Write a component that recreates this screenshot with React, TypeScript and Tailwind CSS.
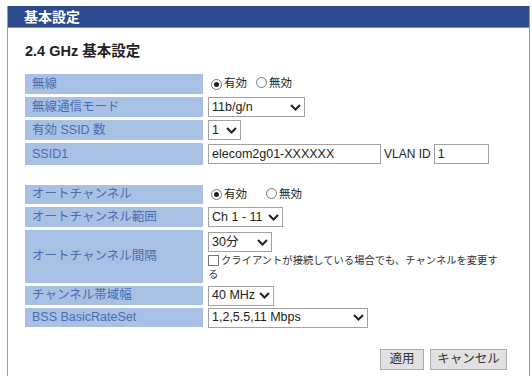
import React from "react";

const Chevron = () => (
  <svg width="11" height="7" viewBox="0 0 11 7" className="shrink-0">
    <path d="M1 1 L5.5 5.5 L10 1" stroke="#222" strokeWidth="2" fill="none" />
  </svg>
);

function Select({ text, w }: { text: string; w: string }) {
  return (
    <div
      className={`${w} h-[20px] border border-[#a2a2a2] bg-white flex items-center justify-between pl-[3px] pr-[3px] text-[12.5px] text-[#222] leading-none`}
    >
      <span>{text}</span>
      <Chevron />
    </div>
  );
}

function Radio({ checked }: { checked?: boolean }) {
  return (
    <span className="w-[11px] h-[11px] rounded-full border border-[#777] bg-white inline-flex items-center justify-center shrink-0">
      {checked && <span className="w-[5px] h-[5px] rounded-full bg-[#222]" />}
    </span>
  );
}

function Row({
  label,
  h,
  children,
}: {
  label: string;
  h: string;
  children: React.ReactNode;
}) {
  return (
    <div className={`flex ${h}`}>
      <div className="w-[178px] shrink-0 bg-[#a9c0e5] text-[#4a6db2] text-[12.5px] flex items-center pl-[7px] leading-none">
        {label}
      </div>
      <div className="ml-[5px] flex-1 flex items-center">{children}</div>
    </div>
  );
}

export default function App() {
  return (
    <div className="w-[532px] h-[376px] bg-white pt-[6px] pl-[7px] pr-[2px] overflow-hidden font-[family-name:'Liberation_Sans','Noto_Sans_CJK_JP',sans-serif]">
      <div className="h-[370px] border-l border-r border-[#9c9c9c] flex flex-col">
        <div className="h-[22px] bg-[#2e4a8e] border-b border-[#7f8fbd] text-white font-bold text-[14px] leading-none flex items-center pl-[16px] shrink-0">
          基本設定
        </div>
        <div className="pl-[17px] w-[499px]">
          <div className="mt-[13px] h-[20px] flex items-center font-bold text-[14.5px] text-[#222] leading-none">
            2.4 GHz 基本設定
          </div>
          <div className="mt-[13px] flex flex-col gap-[3px]">
            <Row label="無線" h="h-[20px]">
              <div className="flex items-center text-[11.5px] text-[#222] leading-none pl-[3px]">
                <Radio checked />
                <span className="ml-[2px]">有効</span>
                <span className="ml-[9px]">
                  <Radio />
                </span>
                <span className="ml-[2px]">無効</span>
              </div>
            </Row>
            <Row label="無線通信モード" h="h-[20px]">
              <Select text="11b/g/n" w="w-[97px]" />
            </Row>
            <Row label="有効 SSID 数" h="h-[20px]">
              <Select text="1" w="w-[33px]" />
            </Row>
            <Row label="SSID1" h="h-[22px]">
              <div className="flex items-center">
                <div className="w-[173px] h-[20px] border border-[#a2a2a2] bg-white flex items-center pl-[3px] text-[12.5px] text-[#222] leading-none">
                  elecom2g01-XXXXXX
                </div>
                <span className="ml-[3px] text-[12px] text-[#222] leading-none">VLAN ID</span>
                <div className="ml-[3px] w-[55px] h-[20px] border border-[#a2a2a2] bg-white flex items-center pl-[3px] text-[12.5px] text-[#222] leading-none">
                  1
                </div>
              </div>
            </Row>
            <div className="h-[14px]" />
            <Row label="オートチャンネル" h="h-[19px]">
              <div className="flex items-center text-[11.5px] text-[#222] leading-none pl-[3px]">
                <Radio checked />
                <span className="ml-[2px]">有効</span>
                <span className="ml-[19px]">
                  <Radio />
                </span>
                <span className="ml-[2px]">無効</span>
              </div>
            </Row>
            <Row label="オートチャンネル範囲" h="h-[20px]">
              <Select text="Ch 1 - 11" w="w-[75px]" />
            </Row>
            <Row label="オートチャンネル間隔" h="h-[53px]">
              <div className="flex flex-col self-start pt-[2px]">
                <Select text="30分" w="w-[64px]" />
                <div className="mt-[2px] flex items-start text-[10.3px] text-[#333] leading-[14px]">
                  <span className="mt-[1px] w-[11px] h-[11px] border border-[#777] bg-white shrink-0" />
                  <span className="ml-[2px]">
                    クライアントが接続している場合でも、チャンネルを変更す
                  </span>
                </div>
                <div className="text-[10.3px] text-[#333] leading-[14px]">る</div>
              </div>
            </Row>
            <Row label="チャンネル帯域幅" h="h-[19px]">
              <Select text="40 MHz" w="w-[66px]" />
            </Row>
            <Row label="BSS BasicRateSet" h="h-[19px]">
              <Select text="1,2,5.5,11 Mbps" w="w-[160px]" />
            </Row>
          </div>
          <div className="mt-[22px] flex justify-end gap-[6px]">
            <div className="w-[44px] h-[21px] bg-[#e1e1e1] border border-[#adadad] flex items-center justify-center text-[12.5px] text-[#333] leading-none">
              適用
            </div>
            <div className="w-[77px] h-[21px] bg-[#e1e1e1] border border-[#adadad] flex items-center justify-center text-[12.5px] text-[#333] leading-none">
              キャンセル
            </div>
          </div>
        </div>
      </div>
    </div>
  );
}
